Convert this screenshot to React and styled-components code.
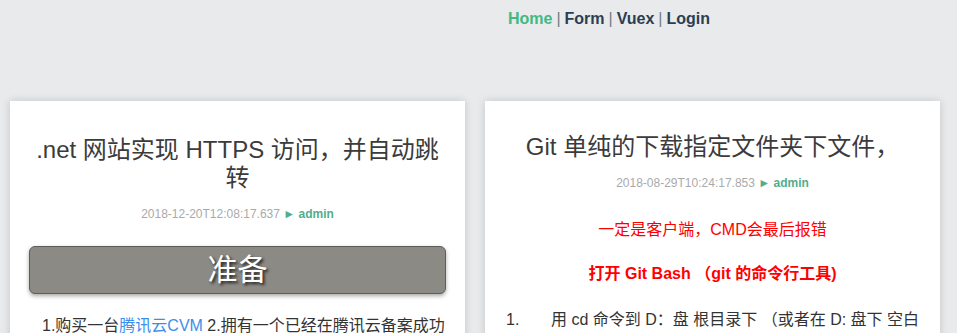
import React from "react";
import styled, { createGlobalStyle } from "styled-components";

const GlobalStyle = createGlobalStyle`
  html, body {
    margin: 0;
    padding: 0;
    overflow: hidden;
    background: #e9eaec;
  }
  body {
    font-family: "Liberation Sans", Arial, "Noto Sans CJK SC", sans-serif;
    color: #333;
  }
`;

const posts = [
  {
    id: 1,
    title: ".net 网站实现 HTTPS 访问，并自动跳转",
    date: "2018-12-20T12:08:17.637",
    author: "admin",
    type: "prepare",
    top: 35,
  },
  {
    id: 2,
    title: "Git 单纯的下载指定文件夹下文件，",
    date: "2018-08-29T10:24:17.853",
    author: "admin",
    type: "git",
    top: 32,
  },
];

const App = () => {
  return (
    <Page>
      <GlobalStyle />
      <Nav>
        <NavLink active>Home</NavLink>
        <Sep>|</Sep>
        <NavLink>Form</NavLink>
        <Sep>|</Sep>
        <NavLink>Vuex</NavLink>
        <Sep>|</Sep>
        <NavLink>Login</NavLink>
      </Nav>

      <CardList>
        {posts.map((post) => (
          <Card key={post.id} top={post.top}>
            <Title>{post.title}</Title>
            <Meta>
              {post.date} <span className="author">► {post.author}</span>
            </Meta>

            {post.type === "prepare" ? (
              <>
                <Banner>准备</Banner>
                <Paragraph indent>
                  1.购买一台<a href="#">腾讯云CVM</a> 2.拥有一个已经在腾讯云备案成功的域名
                  3.申请免费的 SSL 证书
                </Paragraph>
              </>
            ) : (
              <>
                <Notice>一定是客户端，CMD会最后报错</Notice>
                <Notice bold>打开 Git Bash （git 的命令行工具)</Notice>
                <ListItem>
                  <span className="num">1.</span>
                  <span>用 cd 命令到 D：盘 根目录下 （或者在 D: 盘下 空白处右键 Git Bash Here）</span>
                </ListItem>
              </>
            )}
          </Card>
        ))}
      </CardList>
    </Page>
  );
};

const Page = styled.div`
  min-height: 100vh;
`;

const Nav = styled.nav`
  display: flex;
  justify-content: center;
  padding: 10px 0 0 261px;
  height: 92px;
  box-sizing: border-box;
  font-weight: bold;
  font-size: 16px;
  line-height: 18px;
`;

const NavLink = styled.a`
  color: ${(p) => (p.active ? "#42b983" : "#2c3e50")};
  text-decoration: none;
  cursor: pointer;
`;

const Sep = styled.span`
  color: #6f7c88;
  font-weight: normal;
  margin: 0 4px;
`;

const CardList = styled.div`
  display: flex;
  gap: 20px;
  padding: 9px 10px 0;
`;

const Card = styled.article`
  width: 455px;
  min-height: 400px;
  box-sizing: border-box;
  padding: ${(p) => p.top}px 19px 20px;
  background: #fff;
  box-shadow: 0 0 8px rgba(0, 0, 0, 0.16);
`;

const Title = styled.h2`
  margin: 0;
  font-size: 24px;
  line-height: 28px;
  font-weight: normal;
  color: #3b3b3b;
  text-align: center;
`;

const Meta = styled.div`
  margin-top: 14px;
  font-size: 12px;
  line-height: 16px;
  color: #aaa;
  text-align: center;

  .author {
    color: #52ad8c;
    font-weight: bold;
  }
`;

const Banner = styled.div`
  margin-top: 24px;
  height: 48px;
  box-sizing: border-box;
  border: 1px solid #5e5d58;
  border-radius: 6px;
  background: #8b8a85;
  box-shadow: 0 2px 4px rgba(0, 0, 0, 0.35);
  color: #fff;
  font-size: 30px;
  line-height: 46px;
  text-align: center;
  text-shadow: 2px 2px 3px #222;
`;

const Paragraph = styled.p`
  margin: 20px 0 0;
  padding-left: ${(p) => (p.indent ? "13px" : "0")};
  font-size: 16px;
  line-height: 24px;
  color: #333;

  a {
    color: #3b8eea;
    text-decoration: none;
  }
`;

const Notice = styled.p`
  margin: 27px 0 0;
  & + & {
    margin-top: 20px;
  }
  font-size: 16px;
  line-height: 24px;
  color: #ff0000;
  font-weight: ${(p) => (p.bold ? "bold" : "normal")};
  text-align: center;
`;

const ListItem = styled.div`
  display: flex;
  margin-top: 22px;
  padding-left: 2px;
  font-size: 16px;
  line-height: 24px;
  color: #333;

  .num {
    flex: 0 0 45px;
  }
`;

export default App;
